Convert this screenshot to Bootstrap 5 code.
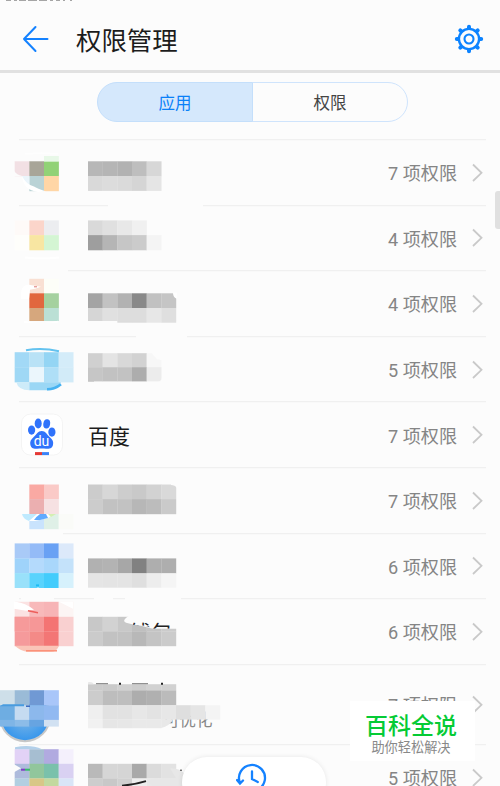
<!DOCTYPE html>
<html lang="zh-CN">
<head>
  <meta charset="UTF-8">
  <meta name="viewport" content="width=device-width, initial-scale=1">
  <title>权限管理</title>
  <link rel="stylesheet" href="https://cdn.jsdelivr.net/npm/bootstrap@5.3.3/dist/css/bootstrap.min.css">
  <style>
    body {
      height: 786px;
      background: #fcfcfc;
      color: #1c1c1c;
      font-family: Roboto, "Noto Sans CJK SC", sans-serif;
    }
    svg { display: block; flex: none; }
    .status-strip { left: 5px; top: 0; }
    .app-header {
      height: 73px;
      border-bottom: 3px solid #e1e1e1;
      padding: 8px 16px 0 21px;
    }
    .app-title { font-size: 25.4px; line-height: 40px; margin-left: 26px; padding-top: 4px; }
    .tab-area { height: 66px; padding: 9px 0 0 5px; }
    .switch { width: 311px; height: 40px; }
    .switch .btn {
      border: 1.5px solid #cfe4fc;
      border-radius: 20px;
      font-size: 16.5px;
      line-height: 24px;
      color: #444;
      padding: 8px 0 4px;
    }
    .switch .btn.active { background: #d5e8fc; border-color: #c4dffb; color: #0a80f8; }
    .app-row { height: 65.6px; }
    .app-row.tall { height: 80px; }
    .app-name { font-size: 21px; width: 160px; line-height: 30px; padding-top: 5px; }
    .perm-count { font-size: 18.1px; color: #858585; line-height: 26px; margin-right: 15px; padding-top: 5px; }
    .scroll-thumb { right: 0; top: 191px; width: 5px; height: 38px; background: #e0e0e0; border-radius: 3px 0 0 3px; }
    .history-pill {
      left: 182px; top: 757px; width: 144px; height: 50px;
      background: #fff; border-radius: 26px;
      box-shadow: 0 0 5px rgba(0, 0, 0, .09);
      padding-top: 5px;
    }
    .site-tag { left: 350px; top: 701px; width: 125px; height: 60px; background: #fff; padding: 11px 3px 0 0; }
    .site-name { font-size: 23px; line-height: 29px; font-weight: 500; color: #05cb35; }
    .site-note { font-size: 13.2px; line-height: 13px; color: #888; }
  </style>
</head>
<body class="position-relative overflow-hidden">
<svg class="status-strip position-absolute" width="70" height="2"><path d="M1 0h5M9 0h3M14 0h7M23 0h9M34 0h8M45 0h3M51 0h4M58 0h2M65 0h2" stroke="#888" stroke-width="1.6"/></svg>

<header class="app-header d-flex align-items-center">
  <svg width="29" height="28" viewBox="0 0 29 28" fill="none" stroke="#1482ff" stroke-width="2" stroke-linecap="round" stroke-linejoin="round"><path d="M26.500 14H3M14.500 2L3 14l11.500 12"/></svg>
  <div class="app-title me-auto">权限管理</div>
  <svg width="30" height="30" viewBox="-15 -15 30 30" fill="none" stroke="#0c83ff">
    <circle r="10.100" stroke-width="2.400"/>
    <circle r="4.500" stroke-width="2.100"/>
    <path stroke-width="4" stroke-linecap="round" d="M0-11v-1.200M0 11v1.200M-11 0h-1.200M11 0h1.200M-7.900-7.900l-.8-.8M7.900-7.900l.8-.8M-7.900 7.900l-.8.8M7.900 7.900l.8.8"/>
  </svg>
</header>

<div class="tab-area d-flex justify-content-center">
  <div class="btn-group switch">
    <button class="btn active w-50">应用</button>
    <button class="btn w-50">权限</button>
  </div>
</div>

<main id="apps"></main>

<div class="scroll-thumb position-absolute"></div>
<div class="history-pill position-absolute d-flex justify-content-center">
  <svg class="me-1" width="32" height="32" viewBox="-16 -16 32 32" fill="none" stroke="#1482ff" stroke-width="2.300" stroke-linecap="round"><path d="M-12 5A13 13 0 1 1 -6 11.500M-15 2l3 3.500 3-3M0-6.500V1l5.800 3"/></svg>
</div>
<div class="site-tag position-absolute text-center">
  <div class="site-name">百科全说</div>
  <div class="site-note">助你轻松解决</div>
</div>

<script src="https://cdn.jsdelivr.net/npm/bootstrap@5.3.3/dist/js/bootstrap.bundle.min.js"></script>
<script>
const CELL = 14.667;

// strips: [x, y, height, colours]; two digits are a grey
const apps = [
  {
    count: 7, line: [19, 486],
    icon: [[14.67, 161.3, 14.7, 'f2e0e4 a8a598 91d276'], [44, 156, 5.3, 'e8f8e8'], [29.33, 176, 15, 'bad3d6 ffd6a6']],
    iconExtra: '<path d="M14 171q3 4 8 5h-8z" fill="#fcfcfc"/><path d="M22 176h7.300v10q-6-5-7.300-10z" fill="#ebf5fb"/><path d="M22 176q1 14 16 16l8-.5q-9-3-12-5-8-2-12-10.500z" fill="#fff"/><path d="M25 154q16-2 33 0" stroke="#fff" fill="none"/>',
    name: [[88, 161.3, 14.7, 'b7 b5 b2 be d7'], [88, 176, 14.7, 'd9 dc da d5 e5']]
  },
  {
    count: 4, line: [19, 108, 203, 486],
    icon: [[14.67, 220, 14.7, 'fefaf8 fbd5ca ecedf0'], [14.67, 234.7, 15, 'fefefb f8e6a2 d4f5d3']],
    iconExtra: '<path d="M25 257q17 2 34 0" stroke="#fff" stroke-width="2" fill="none"/>',
    name: [[88, 220, 14.7, 'd9 e0 e8 f0'], [88, 234.7, 15, '9e b5 c6 cb f4']]
  },
  {
    count: 4, line: [68, 486],
    icon: [[29.33, 279, 14.5, 'f9e0d3 fdfef8'], [29.33, 293.5, 14.7, 'e1673e a5d19f'], [29.33, 308.2, 12.8, 'd6a77d bbe0d5']],
    iconExtra: '<path d="M21 299q-1-15 8-14l12 2-6 2-5 1-1 9zM24 321q18 4 34 0v2H24z" fill="#fff"/><path d="M34 287h3" stroke="#dd7672"/>',
    name: [[88, 293.5, 14.7, 'a4 c2 b2 89 c1 c5'], [88, 308.2, 12.8, 'd6 e0 dd dd e7 df'], [117.33, 321, 1.7, 'dc dc e7 df']],
    nameExtra: '<path d="M173 293h4v6q-4-1-4-6z" fill="#fff"/>'
  },
  {
    count: 5, line: [19, 136, 187, 486],
    icon: [[14.67, 352, 15, 'a2d9f6 b9e2f6 94d5f4 d4ecf9'], [14.67, 367, 15, '9fd8f5 ebf6fc afdff7 d2ebf8']],
    iconExtra: '<path d="M16 382h13.300v8q-11 0-13-8z" fill="#cdebf9"/><path d="M29.300 382H61q-3 8-12 8H29.300z" fill="#9bd7f5"/><path d="M26 350q16-3 33 1" fill="none" stroke="#63c2ef" stroke-width="2"/><path d="M47 389q8 0 14-5" fill="none" stroke="#47b2f1" stroke-width="2.500"/>',
    name: [[88, 353, 14, 'd0 e4 d8 d2 f7'], [88, 367, 14, 'c6 c2 c2 ad ec']],
    nameExtra: '<path d="M151 352h11v8l-5-1zM158 381q4 0 4-4v5z" fill="#fcfcfc"/><path d="M88 381h6" stroke="#c6c6c6"/>'
  },
  { count: 7, line: [19, 486], title: '百度', paw: true },
  {
    count: 7, line: [19, 486],
    icon: [[29.33, 484.5, 14.6, 'faa9a3 facac7'], [29.33, 499.1, 14.9, 'ebafb0 f6e1e2'], [29.33, 514, 15, 'c9e3fd dff0e7'], [58.7, 514, 15, 'fafbf8']],
    iconExtra: '<path d="M22 514h15l-8 7q-6-2-7-7z" fill="#bfeafe"/><path d="M29 521l8-7h17l-6 4-13 3z" fill="#fff"/><path d="M34 520q3-4 6-6h6l2 4-8 2z" fill="#60aaff"/><path d="M48 514h8l-5 3z" fill="#d4efb2"/>',
    name: [[88, 484.5, 14.6, 'cc d7 cd c9 d2 d9'], [88, 499.1, 14.9, 'cc c2 c2 b7 bc ca']],
    nameExtra: '<path d="M171 484h6v4q-2-3-6-3z" fill="#fcfcfc"/>'
  },
  {
    count: 6, line: [63, 486],
    icon: [[14.67, 543, 15, 'a9caf7 94bbf7 69a1f4 dce9fa'], [14.67, 558, 14.7, '9fd3fa b4dafc a9d7fb c4e2fa'], [14.67, 572.7, 14.7, '99e1fa 59d3fd 43ccfc d6f1fc']],
    iconExtra: '<path d="M36 585h3" stroke="#1bbdf5" stroke-width="2"/><path d="M36 588q2-2 4 0z" fill="#fff"/>',
    name: [[88, 558, 14.9, 'b1 b3 a7 81 ae ae'], [88, 572.9, 14.2, 'e5 e4 e4 df ed f5']]
  },
  {
    count: 6, line: [19, 21, 54, 94, 113, 125, 181, 486],
    icon: [[14.67, 602, 15, 'fbe2e2 f8b9ba f7b4b6 fcf5f4'], [14.67, 617, 14.5, 'f69a9a f69797 f47473 f9d0d0'], [14.67, 631.5, 14.7, 'f59a9b f48a87 f37675 f9d0d0']],
    iconExtra: '<path d="M16 602q9 1 18 8l-8 1-12-2v-7zM59 602l14 7v-7z" fill="#fff"/><path d="M14.700 617h14.700v14.500H14.700z" fill="#f69a9a"/><path d="M15 646h44q-2 6-8 6H27q-7-1-12-6z" fill="#fac5b8"/><path d="M26 651h31" stroke="#fb8f77" stroke-width="1.500"/><path d="M28 611l10 2" stroke="#ed5e5b" stroke-width="1.500"/>',
    name: [[88, 617, 14.5, 'c8 d2 c8 bf c4 cb'], [88, 631.5, 14.7, 'cb c2 c2 b8 c4 cb']],
    nameExtra: '<path d="M129 616q-8 5-3 7 7 2 15 3l12 3h24v-13z" fill="#fcfcfc"/><clipPath id="c1"><path d="M133 622.500h8l12 .5h18v6h-17l-9-3-12-1z"/></clipPath><text x="130" y="640.500" font-size="21" clip-path="url(#c1)">钱包</text>'
  },
  {
    count: 7, line: [19, 486], tall: true,
    iconUnder: '<circle cx="25" cy="716" r="26" fill="#c7c7c7"/><circle cx="25" cy="716" r="24" fill="url(#orb)"/><path d="M0 690h60v14H0z" fill="#fcfcfc"/>',
    icon: [[0, 690, 15, 'cedfe9 9abbd7 7099d4 a9c6f9'], [0, 705, 14.7, '6eade2 c5dbf1 8cb8ec 91b9f1'], [0, 719.7, 6.5, '7fb5e6 8cbce8 67a4e1 d1e1f2']],
    iconExtra: '<path d="M3 704h21v2H0z" fill="#499cdf"/><path d="M26 706h4" stroke="#3968bd" stroke-width="1.500"/>',
    nameUnder: '<text x="163" y="725.500" font-size="16.500" fill="#888">可优化</text>',
    name: [[88, 684, 6.2, 'cb ca d0 cc d1 d1'], [88, 690.2, 14.8, 'cc bd be ad b0 bb'], [88, 705, 14.2, 'ef e2 e2 e7 e3 e7 de e5 f4'], [88, 719.2, 8.6, 'f1 e6 e7 e9 e9']],
    nameExtra: '<path d="M88 682q4-1 6 2h-6zM161.300 719h12q-4 7-12 8.800z" fill="#e8e8e8"/><path d="M96 683.500h12M132 683.500h16" stroke="#777"/><path d="M119 683.500h2M161 683.500h2" stroke="#222" stroke-width="2"/>'
  },
  {
    count: 5, line: [19, 486],
    icon: [[14.67, 749, 14.6, 'e2d2f6 a6bed1 b1aae0 f4f0fc'], [14.67, 763.6, 14.6, 'aebbdc 91c69c 7ac1ab d9d1f2'], [14.67, 778.2, 15, 'b2cfe1 d8c787 c3d99f d9e5f7']],
    iconExtra: '<path d="M15 747q16-3 27 2H15z" fill="#b3d0ea"/><path d="M14 764l7 4-7 4z" fill="#fcfcfc"/><path d="M21 769.500h4" stroke="#803dc4" stroke-width="2"/><path d="M25 769.500h5" stroke="#38bd6a" stroke-width="2"/>',
    name: [[88, 763.6, 14.6, 'b9 d6 d5 a9 db e2'], [88, 778.2, 15, 'cd c8 d0 ee e8 e3']],
    nameExtra: '<path d="M170 768q10 0 14 5 6 7 3 13h-34q-3-4-6-6 9-2 13-2h16z" fill="#e7e7e7"/><path d="M122 785.500q13-1 24-4.500" stroke="#222" stroke-width="1.800" fill="none"/><path d="M180 770h2" stroke="#333"/>'
  }
];

const pawIcon = `
  <rect x="21.500" y="414.500" width="41" height="41" rx="9" fill="#fff" stroke="#f4f4f4"/>
  <g fill="#3073fb">
    <ellipse cx="31.600" cy="430.500" rx="3.600" ry="4.600"/>
    <ellipse cx="38.200" cy="423.900" rx="3.500" ry="4.900"/>
    <ellipse cx="46.700" cy="424.300" rx="3.400" ry="4.700" transform="rotate(10 46.700 424.300)"/>
    <ellipse cx="51.900" cy="432.500" rx="3.600" ry="4.600"/>
    <path d="M41.700 431.500c4 0 5 3.500 8 6s4 5 3.300 7.800c-1 4.500-6 4-11.300 3.700-5.300.3-10.300.8-11.300-3.700-.7-2.800.3-5.300 3.300-7.800s4-6 8-6z"/>
  </g>
  <text x="41.500" y="446.500" font-size="14" fill="#fff" text-anchor="middle">du</text>
  <path d="M35 454h7" stroke="#e53935" stroke-width="3"/><path d="M42 454h7" stroke="#3b83f7" stroke-width="3"/>`;

function mosaic(strips) {
  return strips.map(([x, y, h, colours]) => colours.split(' ').map((c, i) =>
    `<rect x="${x + i * CELL}" y="${y}" width="${CELL + 0.2}" height="${h + 0.2}" fill="#${c.length === 2 ? c + c + c : c}"/>`
  ).join('')).join('');
}

let top0 = 139;
document.getElementById('apps').innerHTML = apps.map(app => {
  const h = app.tall ? 80 : 65.6;
  const y = top0;
  top0 += h;

  let line = '';
  for (let i = 0; i < app.line.length; i += 2) {
    line += `M${app.line[i]} .500H${app.line[i + 1]}`;
  }

  const icon = app.paw ? pawIcon : (app.iconUnder || '') + mosaic(app.icon) + (app.iconExtra || '');
  const name = app.title
    ? `<div class="app-name">${app.title}</div>`
    : `<svg width="160" height="${h}" viewBox="88 ${y} 160 ${h}" fill="#222">${app.nameUnder || ''}${mosaic(app.name)}${app.nameExtra || ''}</svg>`;

  return `
    <div class="app-row position-relative d-flex align-items-center ${app.tall ? 'tall' : ''}">
      <svg class="position-absolute top-0 start-0" width="500" height="2"><path d="${line}" stroke="#f0f0f0" stroke-width="1.300"/></svg>
      <svg width="88" height="${h}" viewBox="0 ${y} 88 ${h}">
        <defs><radialGradient id="orb"><stop offset="0" stop-color="#82b9e6"/><stop offset="1" stop-color="#3997ec"/></radialGradient></defs>
        ${icon}
      </svg>
      ${name}
      <div class="perm-count ms-auto">${app.count} 项权限</div>
      <svg class="me-3" width="12" height="20" viewBox="0 0 12 20" fill="none" stroke="#c9c9c9" stroke-width="1.800"><path d="M1 2.500l8.500 8.300L1 19"/></svg>
    </div>`;
}).join('');
</script>
</body>
</html>
